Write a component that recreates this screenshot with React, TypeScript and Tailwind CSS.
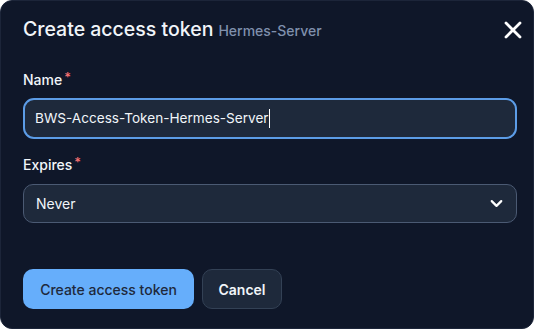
import { X, ChevronDown } from "lucide-react";

export default function App() {
  return (
    <div
      className="w-[534px] h-[329px] overflow-hidden bg-[#0f1729] rounded-[12px] border border-[#1c2539] pl-[22px] pr-[16px] pt-[14px] text-white"
      style={{ fontFamily: "Inter, 'Noto Sans', sans-serif" }}
    >
      {/* Header */}
      <div className="flex items-center justify-between h-[28px]">
        <div className="flex items-baseline gap-[5px]">
          <h2 className="text-[19.5px] leading-[28px] font-medium text-[#f1f5f9]">Create access token</h2>
          <span className="text-[14px] font-medium text-[#7f90ad]">Hermes-Server</span>
        </div>
        <button className="text-white mr-[-10px] mt-[1px]">
          <X className="w-[28px] h-[28px]" strokeWidth={2.4} />
        </button>
      </div>

      {/* Name */}
      <label className="mt-[27px] flex items-start text-[14px] leading-[20px] font-medium text-[#f1f5f9]">
        Name<span className="text-[#f87171] text-[13px] leading-[14px] ml-[2px]">*</span>
      </label>
      <div className="mt-[8px] h-[41px] w-full rounded-[11px] border-2 border-[#5c9ce6] bg-[#1e293b] flex items-center pl-[10px] pr-[11px]">
        <span className="text-[13.6px] text-[#f1f5f9]">BWS-Access-Token-Hermes-Server</span>
        <span className="w-px h-[19px] bg-white ml-px" />
      </div>

      {/* Expires */}
      <label className="mt-[16px] flex items-start text-[14px] leading-[20px] font-medium text-[#f1f5f9]">
        Expires<span className="text-[#f87171] text-[13px] leading-[14px] ml-[2px]">*</span>
      </label>
      <div className="mt-[9px] h-[39px] w-full rounded-[10px] border border-[#4b5a73] bg-[#1e293b] flex items-center justify-between pl-[12px] pr-[10px]">
        <span className="text-[14px] text-[#f1f5f9]">Never</span>
        <ChevronDown className="w-[19px] h-[19px] text-white" strokeWidth={2.8} />
      </div>

      {/* Actions */}
      <div className="mt-[46px] flex items-center gap-[8px]">
        <button className="h-[40px] w-[171px] rounded-[10px] bg-[#66aefb] text-[#1e293b] text-[14px] font-medium">
          Create access token
        </button>
        <button className="h-[40px] w-[80px] rounded-[10px] bg-[#1e293b] border border-[#334155] text-[#f1f5f9] text-[14px] font-semibold">
          Cancel
        </button>
      </div>
    </div>
  );
}
